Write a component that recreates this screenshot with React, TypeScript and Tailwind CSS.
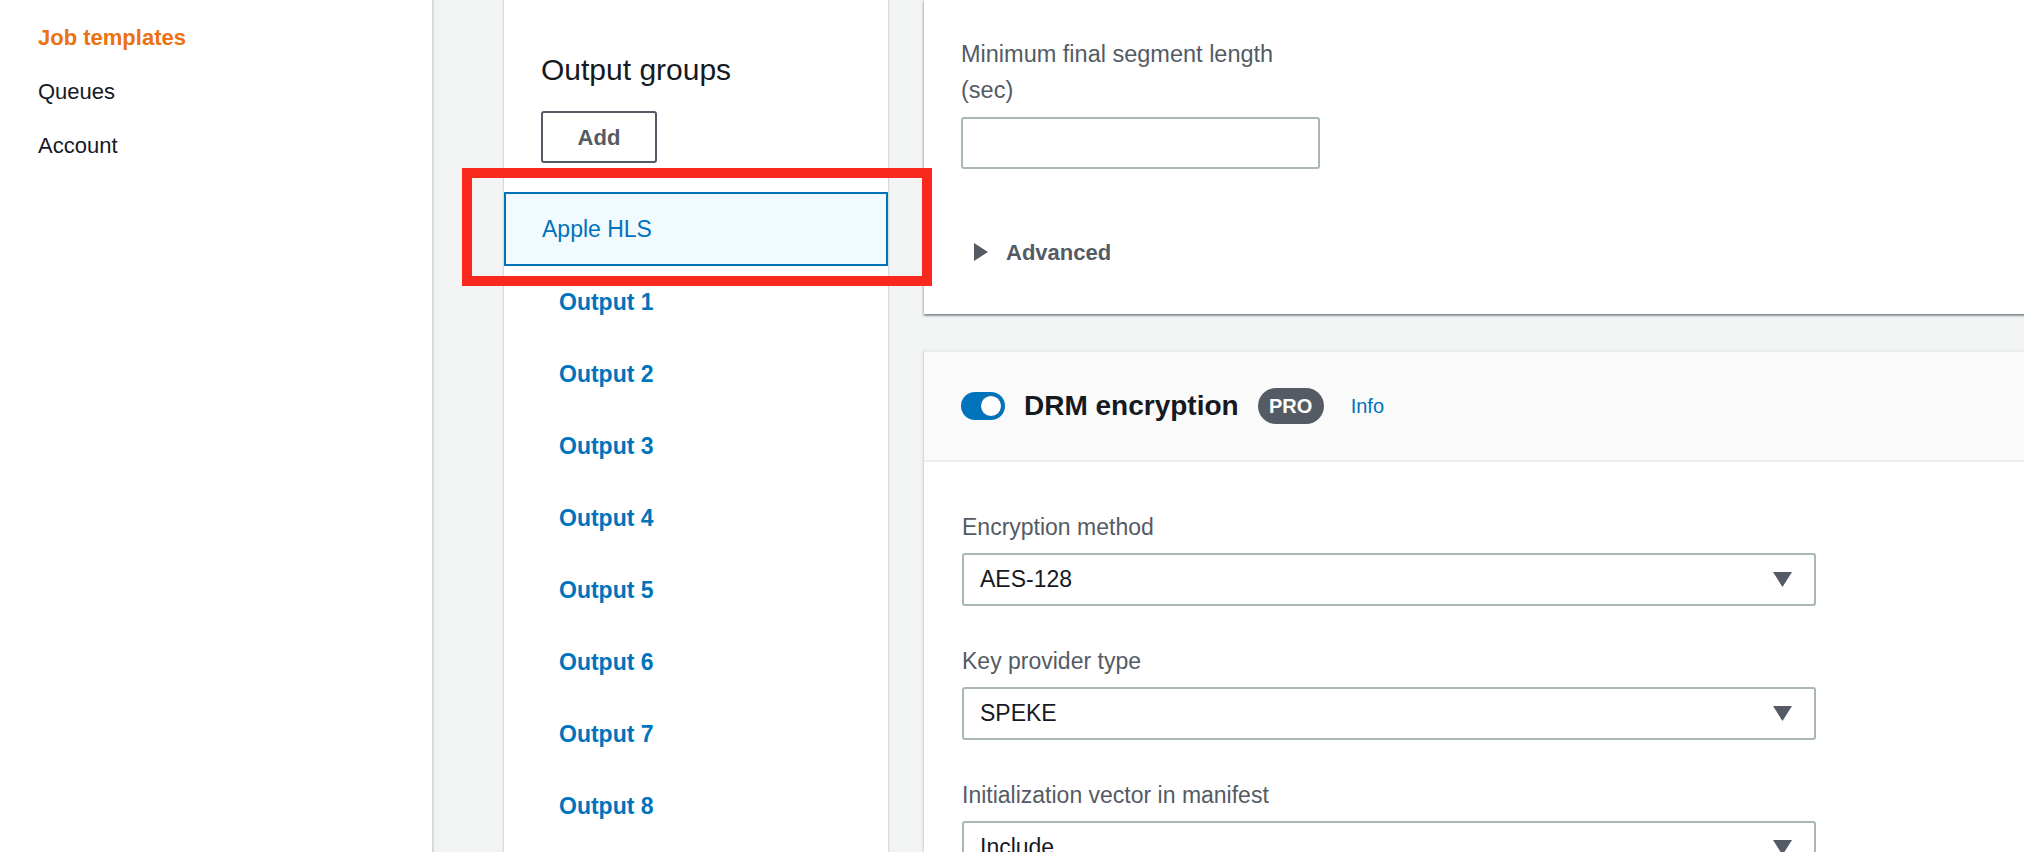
import React from 'react'

const navItems = [
  { label: 'Job templates', active: true },
  { label: 'Queues', active: false },
  { label: 'Account', active: false },
]

const outputs = ['Output 1', 'Output 2', 'Output 3', 'Output 4', 'Output 5', 'Output 6', 'Output 7', 'Output 8']

const drmFields = [
  { label: 'Encryption method', value: 'AES-128' },
  { label: 'Key provider type', value: 'SPEKE' },
  { label: 'Initialization vector in manifest', value: 'Include' },
]

function CaretDown() {
  return (
    <svg width="19" height="15" viewBox="0 0 19 15" className="shrink-0">
      <polygon points="0,0 19,0 9.5,15" fill="#545b64" />
    </svg>
  )
}

function SelectBox({ value }: { value: string }) {
  return (
    <div className="mt-[8px] flex h-[53px] w-[854px] items-center justify-between rounded-[3px] border-2 border-[#aab7b8] bg-white pr-[22px] pl-[16px]">
      <span className="text-[23px] text-[#16191f]">{value}</span>
      <CaretDown />
    </div>
  )
}

export default function App() {
  return (
    <div className="relative flex h-[852px] w-[2024px] overflow-hidden bg-[#f2f3f3] font-['Liberation_Sans',Arial,sans-serif]">
      {/* left navigation */}
      <aside className="flex w-[434px] shrink-0 flex-col border-r-2 border-[#d5dbdb] bg-white pt-[11px] pl-[38px]">
        {navItems.map(item => (
          <a
            key={item.label}
            className={
              item.active
                ? 'text-[22px] leading-[54px] font-bold text-[#ec7211]'
                : 'text-[22px] leading-[54px] text-[#16191f]'
            }
          >
            {item.label}
          </a>
        ))}
      </aside>

      {/* output groups panel */}
      <div className="ml-[69px] flex w-[386px] shrink-0 flex-col border-x border-[#d5dbdb] bg-white pt-[50px] shadow-[0_1px_1px_rgba(0,28,36,0.15)]">
        <h2 className="pl-[37px] text-[30px] leading-[40px] text-[#16191f]">Output groups</h2>
        <div className="mt-[21px] pl-[37px]">
          <button className="h-[52px] w-[116px] rounded-[3px] border-2 border-[#545b64] bg-white text-[22px] font-bold text-[#545b64]">
            Add
          </button>
        </div>
        <div className="mt-[29px] flex h-[74px] shrink-0 items-center border-2 border-[#0073bb] bg-[#f1faff] pl-[36px]">
          <span className="text-[23px] text-[#0073bb]">Apple HLS</span>
        </div>
        {outputs.map(o => (
          <div key={o} className="flex h-[72px] shrink-0 items-center pl-[55px]">
            <span className="text-[23px] font-bold text-[#0073bb]">{o}</span>
          </div>
        ))}
      </div>

      {/* settings column */}
      <div className="ml-[35px] flex w-[1140px] shrink-0 flex-col">
        <section className="h-[314px] shrink-0 bg-white pt-[36px] pl-[37px] shadow-[0_2px_2px_rgba(0,28,36,0.35),1px_1px_2px_rgba(0,28,36,0.15),-1px_1px_2px_rgba(0,28,36,0.15)]">
          <label className="block text-[23.5px] leading-[36px] text-[#545b64]">
            Minimum final segment length
            <br />
            (sec)
          </label>
          <div className="mt-[9px] h-[52px] w-[359px] rounded-[3px] border-2 border-[#aab7b8] bg-white" />
          <div className="mt-[65px] flex h-[36px] items-center gap-[18px] pl-[13px]">
            <svg width="14" height="18" viewBox="0 0 14 18">
              <polygon points="0,0 14,9 0,18" fill="#545b64" />
            </svg>
            <span className="text-[22px] font-bold text-[#545b64]">Advanced</span>
          </div>
        </section>

        <section className="mt-[36px] shrink-0 border-t-2 border-[#eaeded] bg-white pb-[40px] shadow-[1px_1px_2px_rgba(0,28,36,0.15),-1px_1px_2px_rgba(0,28,36,0.15)]">
          <div className="flex h-[110px] items-center border-b-2 border-[#eaeded] bg-[#fafafa] pl-[37px]">
            <div className="flex h-[28px] w-[44px] items-center justify-end rounded-full bg-[#0073bb] pr-[3px]">
              <div className="h-[22px] w-[22px] rounded-full border border-[#0a66a3] bg-white" />
            </div>
            <h3 className="ml-[19px] text-[28px] font-bold text-[#16191f]">DRM encryption</h3>
            <span className="ml-[19px] flex h-[36px] w-[66px] items-center justify-center rounded-full bg-[#545b64] text-[20px] font-bold text-white">
              PRO
            </span>
            <a className="ml-[27px] text-[20px] text-[#0073bb]">Info</a>
          </div>
          <div className="flex flex-col gap-[37px] pt-[47px] pl-[38px]">
            {drmFields.map(f => (
              <div key={f.label}>
                <label className="block text-[23px] leading-[36px] text-[#545b64]">{f.label}</label>
                <SelectBox value={f.value} />
              </div>
            ))}
          </div>
        </section>
      </div>

      {/* annotation highlight */}
      <div className="absolute top-[168px] left-[462px] h-[118px] w-[470px] border-[10px] border-[#f9291e]" />
    </div>
  )
}
